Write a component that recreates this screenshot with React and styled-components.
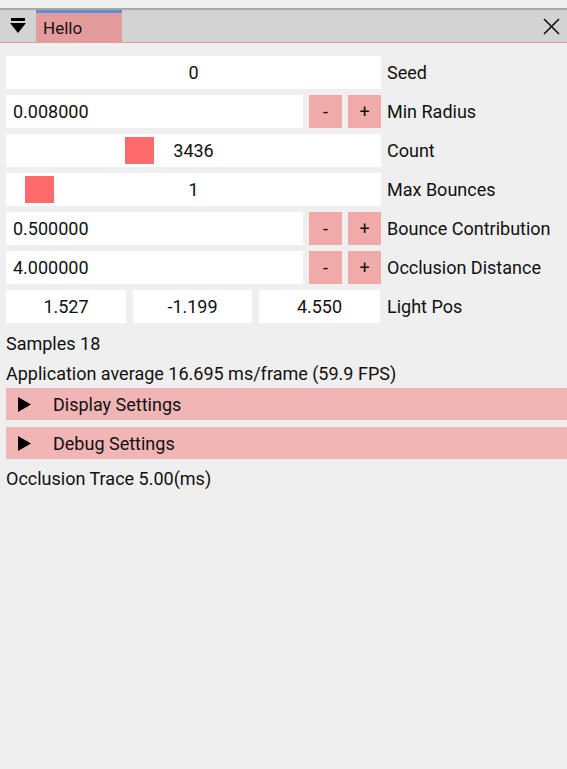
import React from 'react';
import styled, { createGlobalStyle } from 'styled-components';

const Global = createGlobalStyle`
  body {
    margin: 0;
    background: #efefef;
    font-family: Roboto, "Noto Sans", sans-serif;
    font-size: 18px;
    color: #111;
  }
`;

const Window = styled.div`
  width: 567px;
  height: 769px;
  overflow: hidden;
  background: #efefef;
  padding-top: 8px;
  box-sizing: border-box;
`;

const TitleBar = styled.div`
  display: flex;
  align-items: stretch;
  height: 32px;
  background: #d3d3d3;
  border-top: 2px solid #a8a8a8;
  border-bottom: 1px solid #e29a9a;
`;

const Collapse = styled.div`
  width: 36px;
  display: flex;
  align-items: center;
  justify-content: center;
`;

const Tab = styled.div`
  width: 86px;
  background: #e39b9b;
  border-top: 3px solid #5b8fd9;
  display: flex;
  align-items: center;
  padding-left: 7px;
  box-sizing: border-box;
  font-size: 17px;
`;

const Spacer = styled.div`
  flex: 1;
`;

const Close = styled.div`
  width: 32px;
  display: flex;
  align-items: center;
  justify-content: center;
`;

const Body = styled.div`
  padding: 13px 0 0 6px;
  display: flex;
  flex-direction: column;
`;

const Rows = styled.div`
  display: flex;
  flex-direction: column;
  gap: 6px;
`;

const Row = styled.div`
  display: flex;
  align-items: center;
  gap: 6px;
  height: 33px;
`;

const Controls = styled.div`
  width: 375px;
  height: 33px;
  display: flex;
  gap: 6px;
`;

const Field = styled.div`
  flex: 1;
  background: #fff;
  display: flex;
  align-items: center;
  justify-content: ${p => (p.$left ? 'flex-start' : 'center')};
  padding: 0 7px;
  position: relative;
`;

const Grab = styled.div`
  position: absolute;
  top: 3px;
  bottom: 3px;
  width: 29px;
  background: #ff6b6b;
`;

const StepButton = styled.div`
  width: 33px;
  background: #f1aaaa;
  display: flex;
  align-items: center;
  justify-content: center;
`;

const Triple = styled.div`
  width: 375px;
  height: 33px;
  display: grid;
  grid-template-columns: 120px 119px 121px;
  column-gap: 7px;
`;

const Label = styled.div`
  white-space: nowrap;
`;

const TextLine = styled.div`
  height: 30px;
  display: flex;
  align-items: center;
  white-space: nowrap;
`;

const Header = styled.div`
  height: 32px;
  background: #f2b5b6;
  display: flex;
  align-items: center;
  gap: 21px;
  padding-left: 11px;
  margin-bottom: ${p => (p.$last ? '4px' : '7px')};
`;

const Triangle = () => (
  <svg width="15" height="15" viewBox="0 0 15 15">
    <path d="M1 0 L14 7.5 L1 15 Z" fill="#000" />
  </svg>
);

const Slider = ({ value, grab }) => (
  <Field>
    <Grab style={{ left: grab }} />
    <span style={{ position: 'relative' }}>{value}</span>
  </Field>
);

const Stepper = ({ value, label }) => (
  <Row>
    <Controls>
      <Field $left>{value}</Field>
      <StepButton>-</StepButton>
      <StepButton>+</StepButton>
    </Controls>
    <Label>{label}</Label>
  </Row>
);

export default function App() {
  return (
    <Window>
      <Global />
      <TitleBar>
        <Collapse>
          <svg width="16" height="16" viewBox="0 0 16 16">
            <rect x="1" y="0" width="14" height="3" fill="#000" />
            <path d="M0 5 L16 5 L8 15 Z" fill="#000" />
          </svg>
        </Collapse>
        <Tab>Hello</Tab>
        <Spacer />
        <Close>
          <svg width="17" height="17" viewBox="0 0 17 17">
            <path d="M1 1 L16 16 M16 1 L1 16" stroke="#111" strokeWidth="1.6" />
          </svg>
        </Close>
      </TitleBar>
      <Body>
        <Rows>
          <Row>
            <Controls>
              <Field>0</Field>
            </Controls>
            <Label>Seed</Label>
          </Row>
          <Stepper value="0.008000" label="Min Radius" />
          <Row>
            <Controls>
              <Slider value="3436" grab="119px" />
            </Controls>
            <Label>Count</Label>
          </Row>
          <Row>
            <Controls>
              <Slider value="1" grab="19px" />
            </Controls>
            <Label>Max Bounces</Label>
          </Row>
          <Stepper value="0.500000" label="Bounce Contribution" />
          <Stepper value="4.000000" label="Occlusion Distance" />
          <Row>
            <Triple>
              <Field>1.527</Field>
              <Field>-1.199</Field>
              <Field>4.550</Field>
            </Triple>
            <Label>Light Pos</Label>
          </Row>
        </Rows>
        <TextLine style={{ marginTop: 5 }}>Samples 18</TextLine>
        <TextLine>Application average 16.695 ms/frame (59.9 FPS)</TextLine>
        <Header>
          <Triangle />
          Display Settings
        </Header>
        <Header $last>
          <Triangle />
          Debug Settings
        </Header>
        <TextLine>Occlusion Trace 5.00(ms)</TextLine>
      </Body>
    </Window>
  );
}
